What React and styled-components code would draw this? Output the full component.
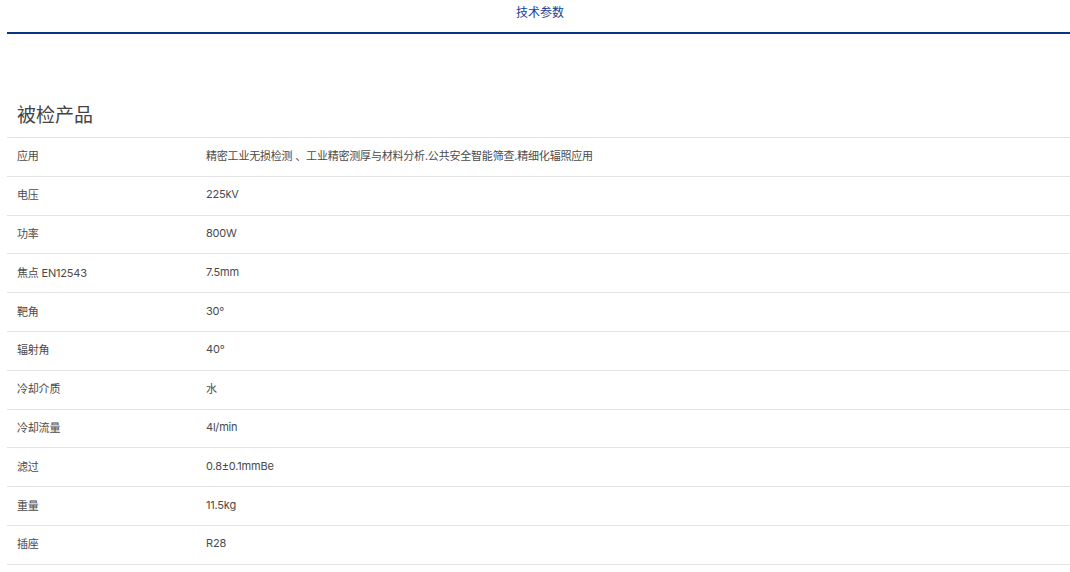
import React from 'react'
import styled, { createGlobalStyle } from 'styled-components'

const GlobalStyle = createGlobalStyle`
	html, body {
		margin: 0;
		padding: 0;
		background: #fff;
	}
	body {
		font-family: 'Inter', 'Noto Sans CJK SC', sans-serif;
		color: #333;
	}
`

const Page = styled.div`
	padding-left: 7px;
	width: 1063px;
`

const TabBar = styled.div`
	display: flex;
	justify-content: center;
	border-bottom: 2px solid #0b3487;
	height: 32px;
	box-sizing: content-box;
`

const Tab = styled.div`
	padding-top: 4px;
	padding-left: 3px;
	font-size: 12px;
	line-height: 16px;
	color: #1a3c96;
	font-family: 'Noto Sans CJK SC', sans-serif;
`

const Heading = styled.h2`
	margin: 0;
	padding: 67px 0 0 10px;
	height: 36px;
	font-size: 19px;
	line-height: 25px;
	font-weight: 400;
	color: #444;
	font-family: 'Noto Sans CJK SC', sans-serif;
`

const Table = styled.div`
	border-top: 1px solid #e4e4e4;
`

const Row = styled.div`
	display: grid;
	grid-template-columns: 199px 1fr;
	align-items: center;
	padding-bottom: 3px;
	box-sizing: border-box;
	height: 38.8px;
	border-bottom: 1px solid #e4e4e4;
	font-size: 11px;
	color: #4a4a4a;
	letter-spacing: -0.2px;
`

const Cell = styled.div`
	padding-left: ${(p) => (p.first ? '10px' : '0')};
	white-space: nowrap;
`

const specs = [
	['应用', '精密工业无损检测 、工业精密测厚与材料分析.公共安全智能筛查.精细化辐照应用'],
	['电压', '225kV'],
	['功率', '800W'],
	['焦点 EN12543', '7.5mm'],
	['靶角', '30°'],
	['辐射角', '40°'],
	['冷却介质', '水'],
	['冷却流量', '4l/min'],
	['滤过', '0.8±0.1mmBe'],
	['重量', '11.5kg'],
	['插座', 'R28'],
]

function App() {
	return (
		<Page>
			<GlobalStyle />
			<TabBar>
				<Tab>技术参数</Tab>
			</TabBar>
			<Heading>被检产品</Heading>
			<Table>
				{specs.map(([label, value]) => (
					<Row key={label}>
						<Cell first>{label}</Cell>
						<Cell>{value}</Cell>
					</Row>
				))}
			</Table>
		</Page>
	)
}

export default App
